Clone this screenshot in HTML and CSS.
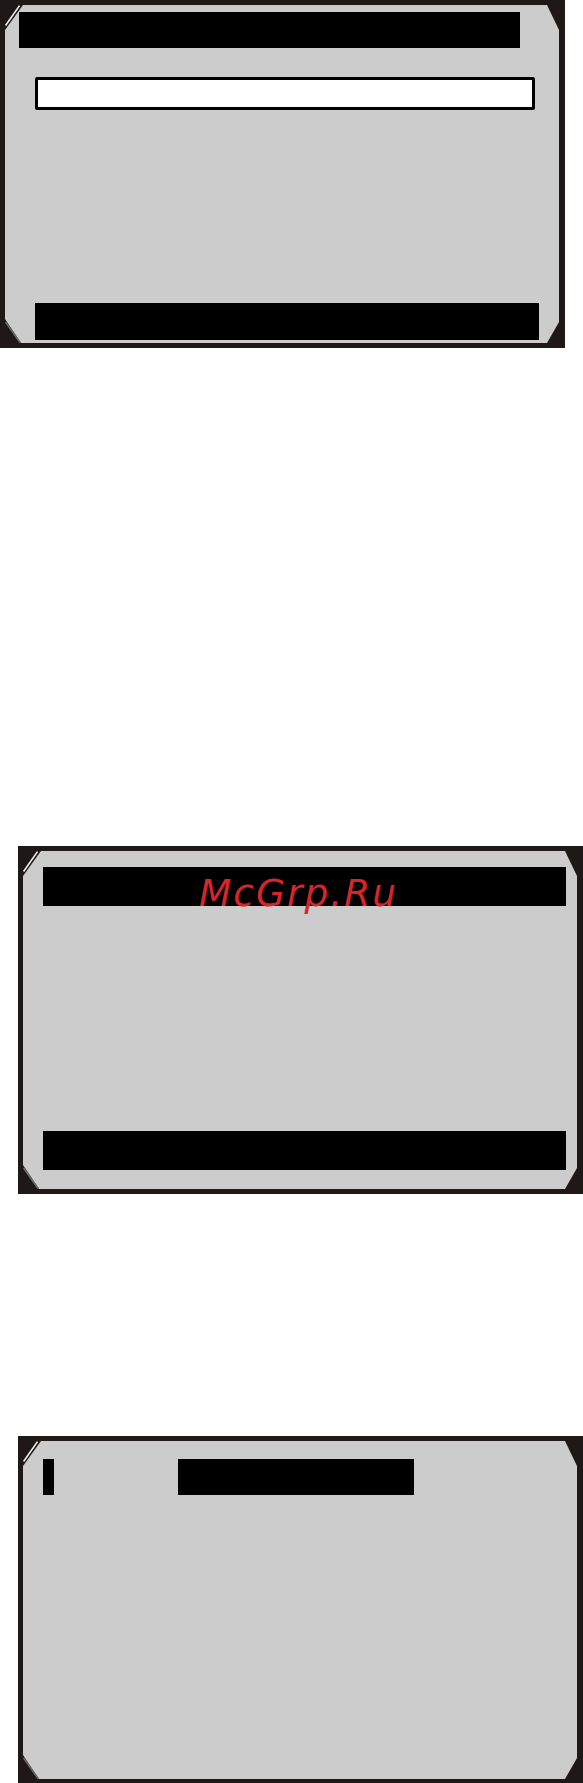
FILE: index.html
```html
<!DOCTYPE html>
<html lang="ru">
<head>
<meta charset="utf-8">
<title>Screens</title>
<link rel="stylesheet" href="styles.css">
</head>
<body>
<div class="page">
  <div class="screen screen-a">
    <div class="glass glass-a">
      <div class="bar title-a"></div>
      <div class="field"></div>
      <div class="bar foot-a"></div>
    </div>
    <svg class="corner corner-tl" width="30" height="32" viewBox="0 0 30 32"><line x1="5.6" y1="25.5" x2="19.5" y2="5.6"/></svg>
    <svg class="corner corner-bl" width="30" height="32" viewBox="0 0 30 32"><line x1="5.6" y1="6" x2="20" y2="26.5"/></svg>
  </div>

  <div class="screen screen-b">
    <div class="glass glass-b">
      <div class="bar title-b"><span class="mark">McGrp.Ru</span></div>
      <div class="bar foot-b"></div>
    </div>
    <svg class="corner corner-tl" width="30" height="32" viewBox="0 0 30 32"><line x1="5.6" y1="25.5" x2="19.5" y2="5.6"/></svg>
    <svg class="corner corner-bl" width="30" height="32" viewBox="0 0 30 32"><line x1="5.6" y1="6" x2="20" y2="26.5"/></svg>
  </div>

  <div class="screen screen-c">
    <div class="glass glass-c">
      <div class="row">
        <div class="bar cursor"></div>
        <div class="bar title-c"></div>
      </div>
    </div>
    <svg class="corner corner-tl" width="30" height="32" viewBox="0 0 30 32"><line x1="5.6" y1="25.5" x2="19.5" y2="5.6"/></svg>
    <svg class="corner corner-bl" width="30" height="32" viewBox="0 0 30 32"><line x1="5.6" y1="6" x2="20" y2="26.5"/></svg>
  </div>
</div>
</body>
</html>
```

FILE: styles.css
```css
html, body {
  margin: 0;
  padding: 0;
  background: #ffffff;
}

.page {
  display: flex;
  flex-direction: column;
  width: 583px;
  height: 1783px;
  overflow: hidden;
}

.screen {
  position: relative;
  box-sizing: border-box;
  width: 565px;
  height: 348px;
  padding: 5px 6px 5px 5px;
  background: #1e1916;
  flex: none;
}

.screen-a {
  margin-left: 0;
}

.screen-b {
  margin-left: 18px;
  margin-top: 498px;
}

.screen-c {
  margin-left: 18px;
  margin-top: 242px;
}

.glass {
  box-sizing: border-box;
  width: 100%;
  height: 100%;
  background: #cccccc;
  display: flex;
  flex-direction: column;
  align-items: flex-start;
  clip-path: polygon(18px 0, calc(100% - 12px) 0, 100% 25px, 100% calc(100% - 21px), calc(100% - 12px) 100%, 16px 100%, 0 calc(100% - 24px), 0 25px);
}

.bar {
  background: #000000;
  flex: none;
}

/* screen A */
.title-a {
  width: 501px;
  height: 36px;
  margin: 7px 0 0 14px;
}

.field {
  box-sizing: border-box;
  width: 500px;
  height: 33px;
  margin: 29px 0 0 30px;
  background: #ffffff;
  border: 3px solid #000000;
  border-radius: 2px;
}

.foot-a {
  width: 504px;
  height: 37px;
  margin: auto 0 3px 30px;
}

/* screen B */
.title-b {
  width: 523px;
  height: 39px;
  margin: 16px 0 0 20px;
  display: flex;
  justify-content: center;
  align-items: flex-end;
}

.mark {
  font-family: "DejaVu Sans", sans-serif;
  font-style: italic;
  font-size: 37.5px;
  letter-spacing: 2px;
  line-height: 1;
  color: #d7252a;
  margin: 0 12px -6px 0;
  white-space: nowrap;
}

.foot-b {
  width: 523px;
  height: 39px;
  margin: auto 0 19px 20px;
}

/* screen C */
.row {
  display: flex;
  align-items: flex-start;
  gap: 124px;
  margin: 18px 0 0 20px;
}

.cursor {
  width: 11px;
  height: 36px;
}

.title-c {
  width: 236px;
  height: 36px;
}

/* corner highlights */
.corner {
  position: absolute;
  left: 0;
}

.corner line {
  stroke-width: 1.6;
  stroke-linecap: butt;
}

.corner-tl {
  top: 0;
}

.corner-tl line {
  stroke: #f2f2f2;
}

.corner-bl {
  bottom: 0;
}

.corner-bl line {
  stroke: #6e6a68;
}
```
